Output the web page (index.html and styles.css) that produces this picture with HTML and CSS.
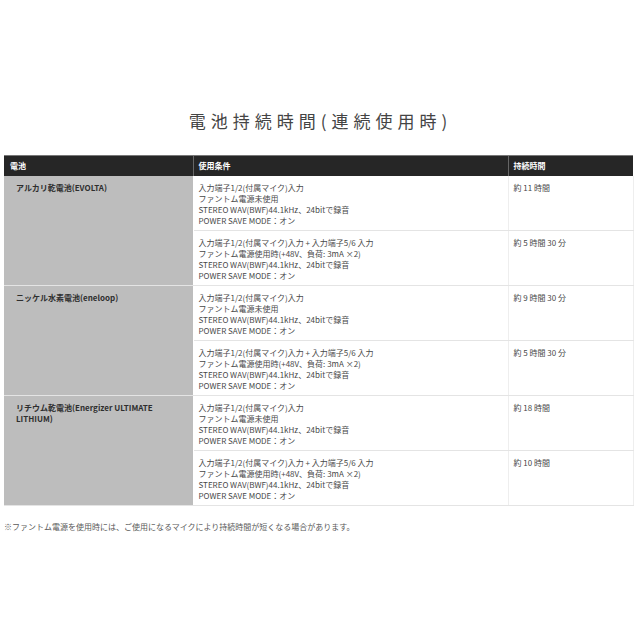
FILE: index.html
```html
<!DOCTYPE html>
<html lang="ja">
<head>
<meta charset="utf-8">
<link rel="stylesheet" href="styles.css">
</head>
<body>
<div class="page">
  <h1 class="title">電池持続時間(連続使用時)</h1>
  <table class="spec">
    <colgroup>
      <col class="c1"><col class="c2"><col class="c3">
    </colgroup>
    <thead>
      <tr><th>電池</th><th>使用条件</th><th>持続時間</th></tr>
    </thead>
    <tbody>
      <tr class="grp">
        <td class="bat" rowspan="2">アルカリ乾電池(EVOLTA)</td>
        <td>入力端子1/2(付属マイク)入力<br>ファントム電源未使用<br>STEREO WAV(BWF)44.1kHz、24bitで録音<br>POWER SAVE MODE：オン</td>
        <td>約 11 時間</td>
      </tr>
      <tr>
        <td>入力端子1/2(付属マイク)入力 + 入力端子5/6 入力<br>ファントム電源使用時(+48V、負荷: 3mA ×2)<br>STEREO WAV(BWF)44.1kHz、24bitで録音<br>POWER SAVE MODE：オン</td>
        <td>約 5 時間 30 分</td>
      </tr>
      <tr class="grp">
        <td class="bat" rowspan="2">ニッケル水素電池(eneloop)</td>
        <td>入力端子1/2(付属マイク)入力<br>ファントム電源未使用<br>STEREO WAV(BWF)44.1kHz、24bitで録音<br>POWER SAVE MODE：オン</td>
        <td>約 9 時間 30 分</td>
      </tr>
      <tr>
        <td>入力端子1/2(付属マイク)入力 + 入力端子5/6 入力<br>ファントム電源使用時(+48V、負荷: 3mA ×2)<br>STEREO WAV(BWF)44.1kHz、24bitで録音<br>POWER SAVE MODE：オン</td>
        <td>約 5 時間 30 分</td>
      </tr>
      <tr class="grp">
        <td class="bat" rowspan="2">リチウム乾電池(Energizer ULTIMATE LITHIUM)</td>
        <td>入力端子1/2(付属マイク)入力<br>ファントム電源未使用<br>STEREO WAV(BWF)44.1kHz、24bitで録音<br>POWER SAVE MODE：オン</td>
        <td>約 18 時間</td>
      </tr>
      <tr>
        <td>入力端子1/2(付属マイク)入力 + 入力端子5/6 入力<br>ファントム電源使用時(+48V、負荷: 3mA ×2)<br>STEREO WAV(BWF)44.1kHz、24bitで録音<br>POWER SAVE MODE：オン</td>
        <td>約 10 時間</td>
      </tr>
    </tbody>
  </table>
  <p class="note">※ファントム電源を使用時には、ご使用になるマイクにより持続時間が短くなる場合があります。</p>
</div>
</body>
</html>
```
FILE: styles.css
```css
html, body {
  margin: 0;
  padding: 0;
  background: #fff;
}
body {
  font-family: "Noto Sans CJK JP", "Noto Sans", sans-serif;
  color: #555;
}
.page {
  width: 629px;
  margin-left: 4px;
  padding-top: 108px;
}
.title {
  margin: 0;
  text-align: center;
  font-size: 17px;
  font-weight: 400;
  letter-spacing: 5px;
  line-height: 26px;
  color: #444;
  padding-left: 4px;
}
.spec {
  margin-top: 21px;
  width: 629px;
  border-collapse: collapse;
  table-layout: fixed;
  font-size: 8px;
  line-height: 11px;
}
.c1 { width: 189px; }
.c2 { width: 315px; }
.c3 { width: 125px; }
.spec th {
  background: #262626;
  color: #fff;
  font-weight: 700;
  text-align: left;
  height: 20px;
  padding: 0 5px;
  border-top: 1px solid #777;
  border-left: 1px solid #666;
  box-sizing: border-box;
}
.spec th:first-child {
  border-left: none;
  padding-left: 6px;
}
.spec td {
  vertical-align: top;
  padding: 6px 5px 4px;
  height: 44px;
  color: #484848;
  border-top: 1px solid #e4e4e4;
  border-bottom: 1px solid #e4e4e4;
  border-right: 1px solid #eee;
}
.spec td.bat {
  background: #bdbdbd;
  color: #2e2e2e;
  font-weight: 700;
  padding-left: 12px;
  padding-right: 12px;
  border-top: 1px solid #e8e8e8;
  border-right: 1px solid #fff;
}
.spec tbody tr:first-child td {
  border-top: none;
}
.note {
  margin: 15px 0 0;
  font-size: 8px;
  line-height: 11px;
  color: #5a5a5a;
}
```
